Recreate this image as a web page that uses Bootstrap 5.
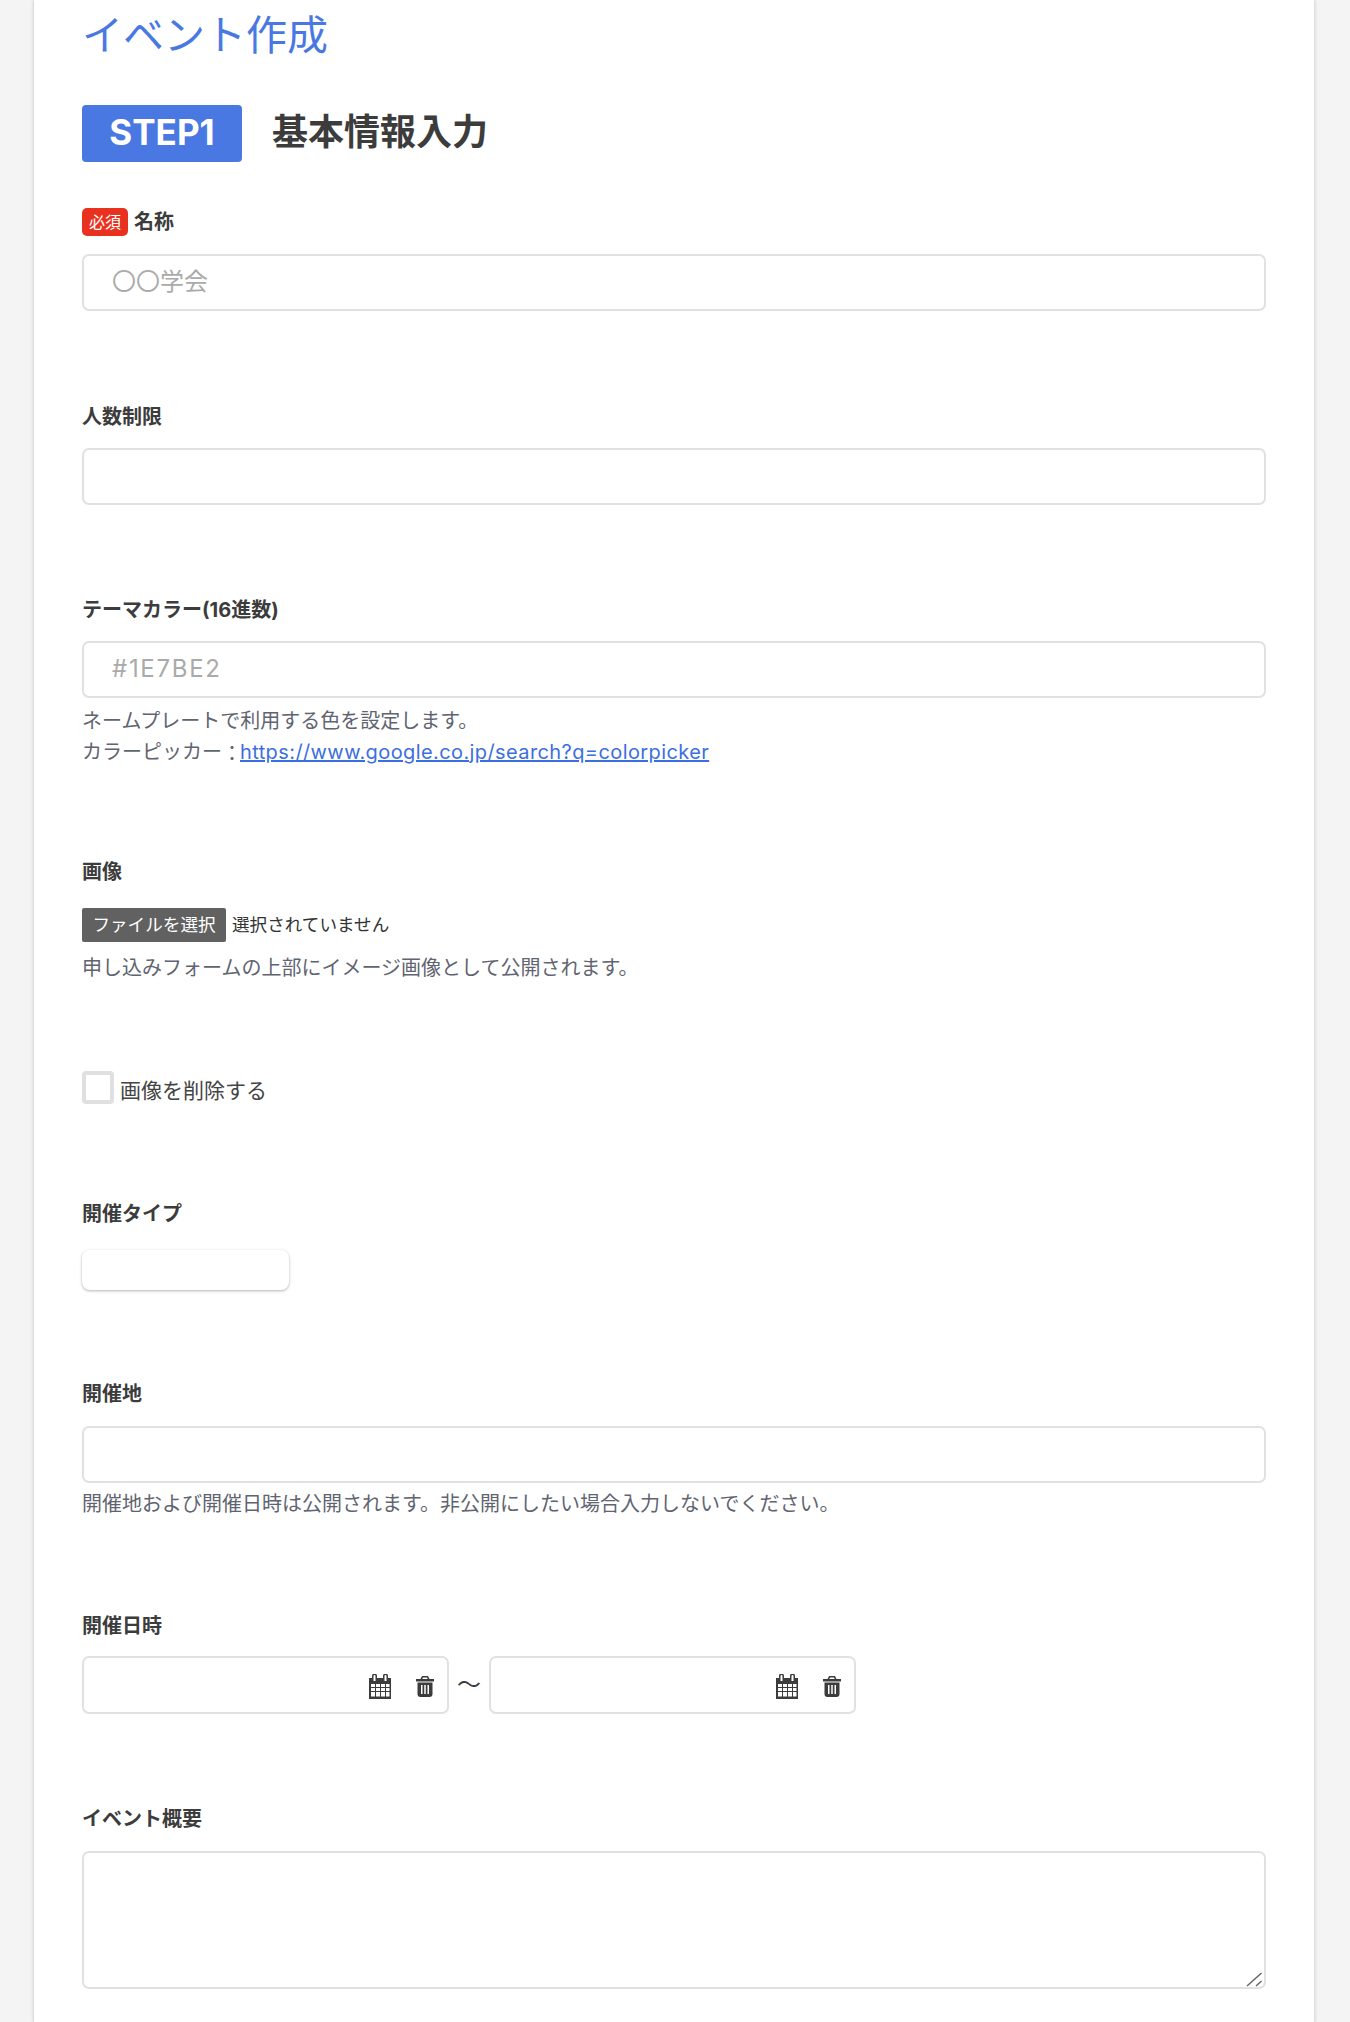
<!DOCTYPE html>
<html lang="ja">
<head>
<meta charset="utf-8">
<title>イベント作成</title>
<link href="https://cdn.jsdelivr.net/npm/bootstrap@5.3.0/dist/css/bootstrap.min.css" rel="stylesheet">
<style>
html,body{background:#f4f4f4;}
body{font-family:"Inter","Noto Sans CJK JP",sans-serif;color:#3c3c3c;}
.ev-sheet{background:#fff;margin:0 36px 0 34px;padding:4px 48px 34px;box-shadow:0 0 4px rgba(0,0,0,.22);min-height:2022px;}
.ev-title{font-size:41px;line-height:63px;color:#4a78e3;font-weight:400;margin:0 0 38px;}
.ev-step{background:#4a78e3;color:#fff;width:160px;height:57px;border-radius:4px;font-size:35px;font-weight:700;padding-bottom:3px;}
.ev-stephead{font-size:36px;font-weight:700;line-height:54px;margin:0 0 0 30px;color:#3c3c3c;}
.ev-head{margin-bottom:46px;}
.ev-label{font-size:20px;font-weight:700;line-height:28px;margin:0;color:#3c3c3c;display:flex;}
.ev-req{background:#e8321f;color:#fff;font-size:16px;font-weight:400;width:46px;height:28px;border-radius:5px;margin-right:6px;}
.ev-field{margin-bottom:91.5px;}
.ev-field.ev-colorfield{margin-bottom:90.5px;}
.ev-field.ev-imgfield{margin-bottom:87.4px;}
.form-control.ev-input{height:57px;border:2.5px solid #e1e1e1;border-radius:7px;font-size:24px;padding:0 28px 2px;margin-top:17px;}
.form-control.ev-input.ev-gap{margin-top:18px;}
.form-control.ev-input::placeholder{color:#aaa;}
.form-control.ev-input.ev-wide::placeholder{letter-spacing:1.700px;}
.ev-help{font-size:20px;line-height:31px;color:#5f6470;margin:7.500px 0 0;}
.ev-help.ev-helpnear{margin-top:6.500px;}
.ev-help.ev-helpfile{margin-top:10.500px;}
.ev-help a{color:#3b6fe0;letter-spacing:.4px;}
.ev-colon{vertical-align:-2px;margin-right:-2px;line-height:1;}
.ev-filebtn{background:#616161;color:#fff;font-size:17.6px;width:144px;height:34px;border-radius:2px;}
.ev-filename{font-size:17.6px;color:#333;margin-left:6px;}
.ev-filerow{margin-top:22px;}
.ev-box{width:32px;height:33px;border:4px solid #e0e0e0;border-radius:4px;background:#fff;flex:none;}
.ev-boxtext{font-size:21px;line-height:1;color:#444;margin-left:6px;padding-top:6px;}
.ev-checkrow{margin-bottom:96px;}
.ev-select{width:207px;height:40px;background:#fff;border-radius:8px;box-shadow:0 1px 3px rgba(0,0,0,.3);margin-top:22px;margin-bottom:90px;}
.ev-date{width:367px;height:58px;border:2.5px solid #e1e1e1;border-radius:7px;padding:3px 13.500px 0 0;gap:24px;}
.ev-daterow{margin-top:16px;}
.ev-tilde{width:40px;font-size:24px;}
.ev-areawrap{margin-top:17.500px;}
.form-control.ev-area{height:138px;border:2.5px solid #e1e1e1;border-radius:7px;resize:none;}
.ev-grip{position:absolute;right:3px;bottom:2px;}
</style>
</head>
<body>
<svg class="d-none">
  <symbol id="ev-cal" viewBox="0 0 24 25"><path fill="#3c3c3c" d="M1 4h3V2a2.500 2.500 0 0 1 5 0v2h6V2a2.500 2.500 0 0 1 5 0v2h3v21H1z"/><path fill="#fff" d="M5.500 2a1 1 0 0 1 2 0v5h-2zM16.500 2a1 1 0 0 1 2 0v5h-2z"/><path fill="#fff" d="M3 10h4v3H3zM8 10h4v3H8zM13 10h4v3h-4zM18 10h3.500v3H18zM3 14h4v3H3zM8 14h4v3H8zM13 14h4v3h-4zM18 14h3.500v3H18zM3 18h4v4.500H3zM8 18h4v4.500H8zM13 18h4v4.500h-4zM18 18h3.500v4.500H18z"/></symbol>
  <symbol id="ev-trash" viewBox="0 0 18 21"><path fill="#3c3c3c" d="M6 0h6l1.500 3H18v2.500H0V3h4.500zM7 1.500l-.7 1.500h5.400L11 1.500zM1.500 6.500h15V18a3 3 0 0 1-3 3h-9a3 3 0 0 1-3-3z"/><path fill="#fff" d="M5 9h1.500v9H5zM8.250 9h1.500v9h-1.500zM11.500 9H13v9h-1.500z"/></symbol>
</svg>
<main class="ev-sheet">
  <h1 class="ev-title">イベント作成</h1>
  <div class="d-flex ev-head">
    <div class="ev-step d-flex align-items-center justify-content-center">STEP1</div>
    <h2 class="ev-stephead">基本情報入力</h2>
  </div>

  <div class="ev-field">
    <label class="ev-label"><span class="ev-req d-flex align-items-center justify-content-center">必須</span>名称</label>
    <input class="form-control ev-input ev-gap" placeholder="〇〇学会">
  </div>
  <div class="ev-field">
    <label class="ev-label">人数制限</label>
    <input class="form-control ev-input">
  </div>
  <div class="ev-field ev-colorfield">
    <label class="ev-label">テーマカラー(16進数)</label>
    <input class="form-control ev-input ev-wide" placeholder="#1E7BE2">
    <p class="ev-help">ネームプレートで利用する色を設定します。<br>カラーピッカー<span class="ev-colon">：</span><a href="#">https://www.google.co.jp/search?q=colorpicker</a></p>
  </div>
  <div class="ev-field ev-imgfield">
    <label class="ev-label">画像</label>
    <div class="d-flex align-items-center ev-filerow">
      <span class="ev-filebtn d-flex align-items-center justify-content-center">ファイルを選択</span>
      <span class="ev-filename">選択されていません</span>
    </div>
    <p class="ev-help ev-helpfile">申し込みフォームの上部にイメージ画像として公開されます。</p>
  </div>
  <div class="d-flex align-items-center ev-checkrow">
    <span class="ev-box"></span><span class="ev-boxtext">画像を削除する</span>
  </div>
  <label class="ev-label">開催タイプ</label>
  <div class="ev-select"></div>
  <div class="ev-field">
    <label class="ev-label">開催地</label>
    <input class="form-control ev-input ev-gap">
    <p class="ev-help ev-helpnear">開催地および開催日時は公開されます。非公開にしたい場合入力しないでください。</p>
  </div>
  <div class="ev-field">
    <label class="ev-label">開催日時</label>
    <div class="d-flex align-items-center ev-daterow">
      <div class="ev-date d-flex align-items-center justify-content-end">
        <svg width="24" height="25"><use href="#ev-cal"/></svg>
        <svg width="18" height="21"><use href="#ev-trash"/></svg>
      </div>
      <span class="ev-tilde text-center">〜</span>
      <div class="ev-date d-flex align-items-center justify-content-end">
        <svg width="24" height="25"><use href="#ev-cal"/></svg>
        <svg width="18" height="21"><use href="#ev-trash"/></svg>
      </div>
    </div>
  </div>
  <label class="ev-label">イベント概要</label>
  <div class="position-relative ev-areawrap">
    <textarea class="form-control ev-area"></textarea>
    <svg class="ev-grip" width="17" height="15" viewBox="0 0 17 15"><path d="M1 14 15.500 1M10 14l5.500-5" fill="none" stroke="#666" stroke-width="1.500"/></svg>
  </div>
</main>
<script src="https://cdn.jsdelivr.net/npm/bootstrap@5.3.0/dist/js/bootstrap.bundle.min.js"></script>
</body>
</html>
